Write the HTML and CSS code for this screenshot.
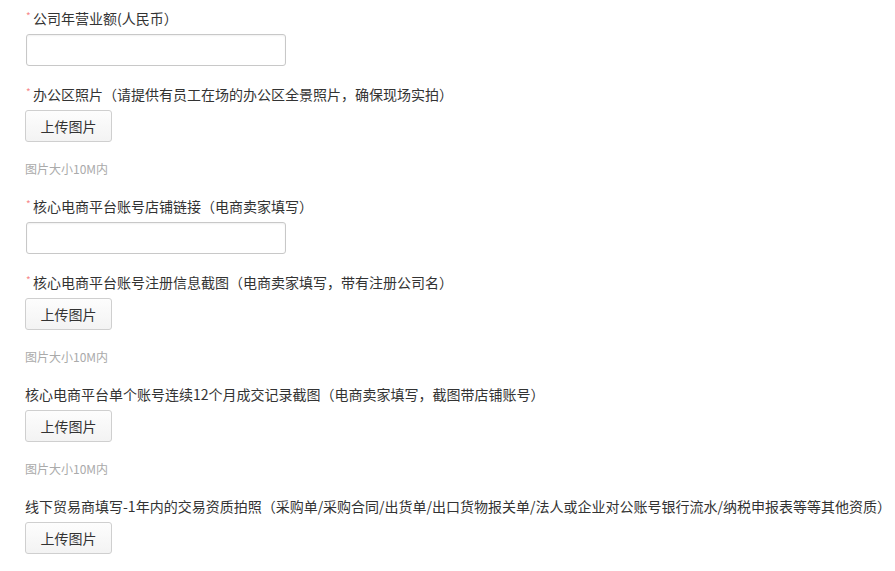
FILE: index.html
```html
<!DOCTYPE html>
<html lang="zh-CN">
<head>
  <meta charset="UTF-8">
  <meta name="viewport" content="width=device-width, initial-scale=1.0">
  <title>资质信息</title>
  <link rel="stylesheet" href="styles.css">
</head>
<body>
  <form class="form">
    <div class="field">
      <label class="label"><span class="required">*</span>公司年营业额(人民币）</label>
      <input class="input" type="text">
    </div>

    <div class="field">
      <label class="label"><span class="required">*</span>办公区照片（请提供有员工在场的办公区全景照片，确保现场实拍）</label>
      <button type="button" class="upload">上传图片</button>
      <p class="hint">图片大小10M内</p>
    </div>

    <div class="field">
      <label class="label"><span class="required">*</span>核心电商平台账号店铺链接（电商卖家填写）</label>
      <input class="input" type="text">
    </div>

    <div class="field">
      <label class="label"><span class="required">*</span>核心电商平台账号注册信息截图（电商卖家填写，带有注册公司名）</label>
      <button type="button" class="upload">上传图片</button>
      <p class="hint">图片大小10M内</p>
    </div>

    <div class="field">
      <label class="label">核心电商平台单个账号连续12个月成交记录截图（电商卖家填写，截图带店铺账号）</label>
      <button type="button" class="upload">上传图片</button>
      <p class="hint">图片大小10M内</p>
    </div>

    <div class="field">
      <label class="label">线下贸易商填写-1年内的交易资质拍照（采购单/采购合同/出货单/出口货物报关单/法人或企业对公账号银行流水/纳税申报表等等其他资质）</label>
      <button type="button" class="upload">上传图片</button>
    </div>
  </form>
</body>
</html>
```

FILE: styles.css
```css
/* Base */
body {
  margin: 8px;
  background-color: #fff;
  color: #333;
  font-family: "Noto Sans CJK SC", "Microsoft YaHei", sans-serif;
  font-size: 14px;
}

/* Form */
.form {
  display: flex;
  flex-direction: column;
  padding-left: 17px;
}

.field {
  display: flex;
  flex-direction: column;
  align-items: flex-start;
  margin-bottom: 18px;
}

.label {
  display: block;
  line-height: 20px;
  height: 20px;
  margin-bottom: 6px;
  white-space: nowrap;
  color: #333;
}

.required {
  display: inline-block;
  width: 7px;
  margin-left: 1px;
  font-size: 10px;
  line-height: 10px;
  vertical-align: top;
  padding-top: 3px;
  color: #f78989;
}

/* Text input */
.input {
  box-sizing: border-box;
  width: 260px;
  height: 32px;
  margin: 0 0 0 1px;
  padding: 0 8px;
  border: 1px solid #c8c8c8;
  border-radius: 3px;
  background-color: #fff;
  box-shadow: inset 0 1px 2px rgba(0, 0, 0, 0.06);
  font-family: inherit;
  font-size: 14px;
}

/* Upload button */
.upload {
  box-sizing: border-box;
  width: 87px;
  height: 32px;
  margin: 0;
  padding: 0;
  border: 1px solid #cfcfcf;
  border-radius: 3px;
  background: linear-gradient(#fdfdfd, #f3f3f3);
  color: #333;
  font-family: inherit;
  font-size: 14px;
  cursor: pointer;
}

/* Hint */
.hint {
  margin: 17px 0 -1px;
  line-height: 20px;
  font-size: 12px;
  color: #aaa;
}
```
